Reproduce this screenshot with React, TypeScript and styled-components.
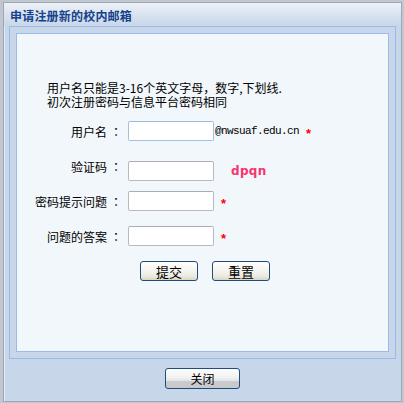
import React, { FC, ReactElement } from 'react';
import styled, { createGlobalStyle } from 'styled-components';

const GlobalStyle = createGlobalStyle`
  html, body {
    margin: 0;
    padding: 0;
    background: #c3c7cd;
  }
  body {
    font-family: "Noto Sans CJK SC", "Liberation Sans", sans-serif;
    font-size: 12px;
    color: #000;
  }
`;

const Page = styled.div`
  padding: 2px 2px 1px 3px;
  width: 404px;
  height: 403px;
  box-sizing: border-box;
`;

const Dialog = styled.div`
  width: 399px;
  height: 400px;
  box-sizing: border-box;
  border: 1px solid #9aa8bc;
  box-shadow: inset 1px 1px 0 #e4ebf4;
  background: #c7d6e9;
  display: flex;
  flex-direction: column;
`;

const TitleBar = styled.div`
  height: 23px;
  flex-shrink: 0;
  padding: 2px 0 0 6px;
  box-sizing: border-box;
  line-height: 21px;
  background: linear-gradient(#eef2f8, #dbe4f0 45%, #c9d7ea);
  color: #15428b;
  font-weight: bold;
  font-size: 12px;
  letter-spacing: 0.2px;
`;

const Body = styled.div`
  padding: 0 5px;
`;

const OuterPanel = styled.div`
  height: 333px;
  box-sizing: border-box;
  border: 1px solid #99bbe8;
  padding: 6px;
`;

const InnerPanel = styled.div`
  height: 319px;
  box-sizing: border-box;
  border: 1px solid #99bbe8;
  background: #f2f7fb;
  padding-top: 47px;
`;

const Note = styled.div`
  padding-left: 30px;
  line-height: 14px;
`;

const Row = styled.div<{ $top: number }>`
  display: flex;
  align-items: center;
  height: 20px;
  margin-top: ${(p) => p.$top}px;
`;

const Label = styled.label<{ $raise?: number }>`
  width: 105px;
  flex-shrink: 0;
  text-align: right;
  white-space: nowrap;
  margin-bottom: ${(p) => (p.$raise || 0) * 2}px;
`;

const Colon = styled.span`
  display: inline-block;
  width: 12px;
  margin-left: 3px;
  font-family: "Noto Sans CJK JP", sans-serif;
`;

const Input = styled.input<{ $active?: boolean }>`
  width: 86px;
  height: 20px;
  box-sizing: border-box;
  margin: 0 0 0 6px;
  padding: 0 2px;
  border: 1px solid ${(p) => (p.$active ? '#a3c2df' : '#b7bac4')};
  border-top-color: ${(p) => (p.$active ? '#9cbcdb' : '#a9acb6')};
  border-radius: 2px;
  background: #fff;
  outline: none;
  font-size: 12px;
`;

const Suffix = styled.span`
  font-family: "Liberation Mono", monospace;
  font-size: 11px;
  letter-spacing: -0.6px;
  margin-left: 1px;
`;

const Star = styled.span<{ $gap: number }>`
  color: #ff0000;
  font-family: "Liberation Sans", sans-serif;
  font-size: 13px;
  font-weight: bold;
  margin-left: ${(p) => p.$gap}px;
  padding-top: 4px;
`;

const Captcha = styled.span`
  margin-left: 17px;
  font-family: "DejaVu Sans", sans-serif;
  font-weight: bold;
  font-size: 12px;
  color: #f8336c;
  letter-spacing: 0.3px;
`;

const Buttons = styled.div`
  display: flex;
  gap: 14px;
  margin-top: 15px;
  padding-left: 123px;
`;

const Button = styled.button<{ $w: number; $h: number }>`
  width: ${(p) => p.$w}px;
  height: ${(p) => p.$h}px;
  box-sizing: border-box;
  padding: 0;
  border: 1px solid #1f4e7d;
  border-radius: 3px;
  background: linear-gradient(#ffffff, #f6f5f0 45%, #ebe9df 80%, #d8d5c9);
  font-family: "Noto Sans CJK SC", sans-serif;
  font-size: 13px;
  line-height: 1;
  color: #000;
`;

const Footer = styled.div`
  flex: 1;
  display: flex;
  justify-content: center;
  padding-top: 9px;
`;

const CloseButton = styled(Button)`
  font-size: 12px;
  background: linear-gradient(#fdfdfd, #f1f1f2 45%, #e2e3e5 62%, #c9cbcf 66%, #c6c8cc);
`;

const App: FC = (): ReactElement => (
  <Page>
    <GlobalStyle />
    <Dialog>
      <TitleBar>申请注册新的校内邮箱</TitleBar>
      <Body>
        <OuterPanel>
          <InnerPanel>
            <Note>
              用户名只能是3-16个英文字母，数字,下划线.
              <br />
              初次注册密码与信息平台密码相同
            </Note>
            <Row $top={12}>
              <Label>
                用户名<Colon>：</Colon>
              </Label>
              <Input $active />
              <Suffix>@nwsuaf.edu.cn</Suffix>
              <Star $gap={7}>*</Star>
            </Row>
            <Row $top={20}>
              <Label $raise={5}>
                验证码<Colon>：</Colon>
              </Label>
              <Input />
              <Captcha>dpqn</Captcha>
            </Row>
            <Row $top={10}>
              <Label>
                密码提示问题<Colon>：</Colon>
              </Label>
              <Input />
              <Star $gap={7}>*</Star>
            </Row>
            <Row $top={15}>
              <Label>
                问题的答案<Colon>：</Colon>
              </Label>
              <Input />
              <Star $gap={7}>*</Star>
            </Row>
            <Buttons>
              <Button $w={58} $h={20}>提交</Button>
              <Button $w={58} $h={20}>重置</Button>
            </Buttons>
          </InnerPanel>
        </OuterPanel>
      </Body>
      <Footer>
        <CloseButton $w={75} $h={21}>关闭</CloseButton>
      </Footer>
    </Dialog>
  </Page>
);

export default App;
